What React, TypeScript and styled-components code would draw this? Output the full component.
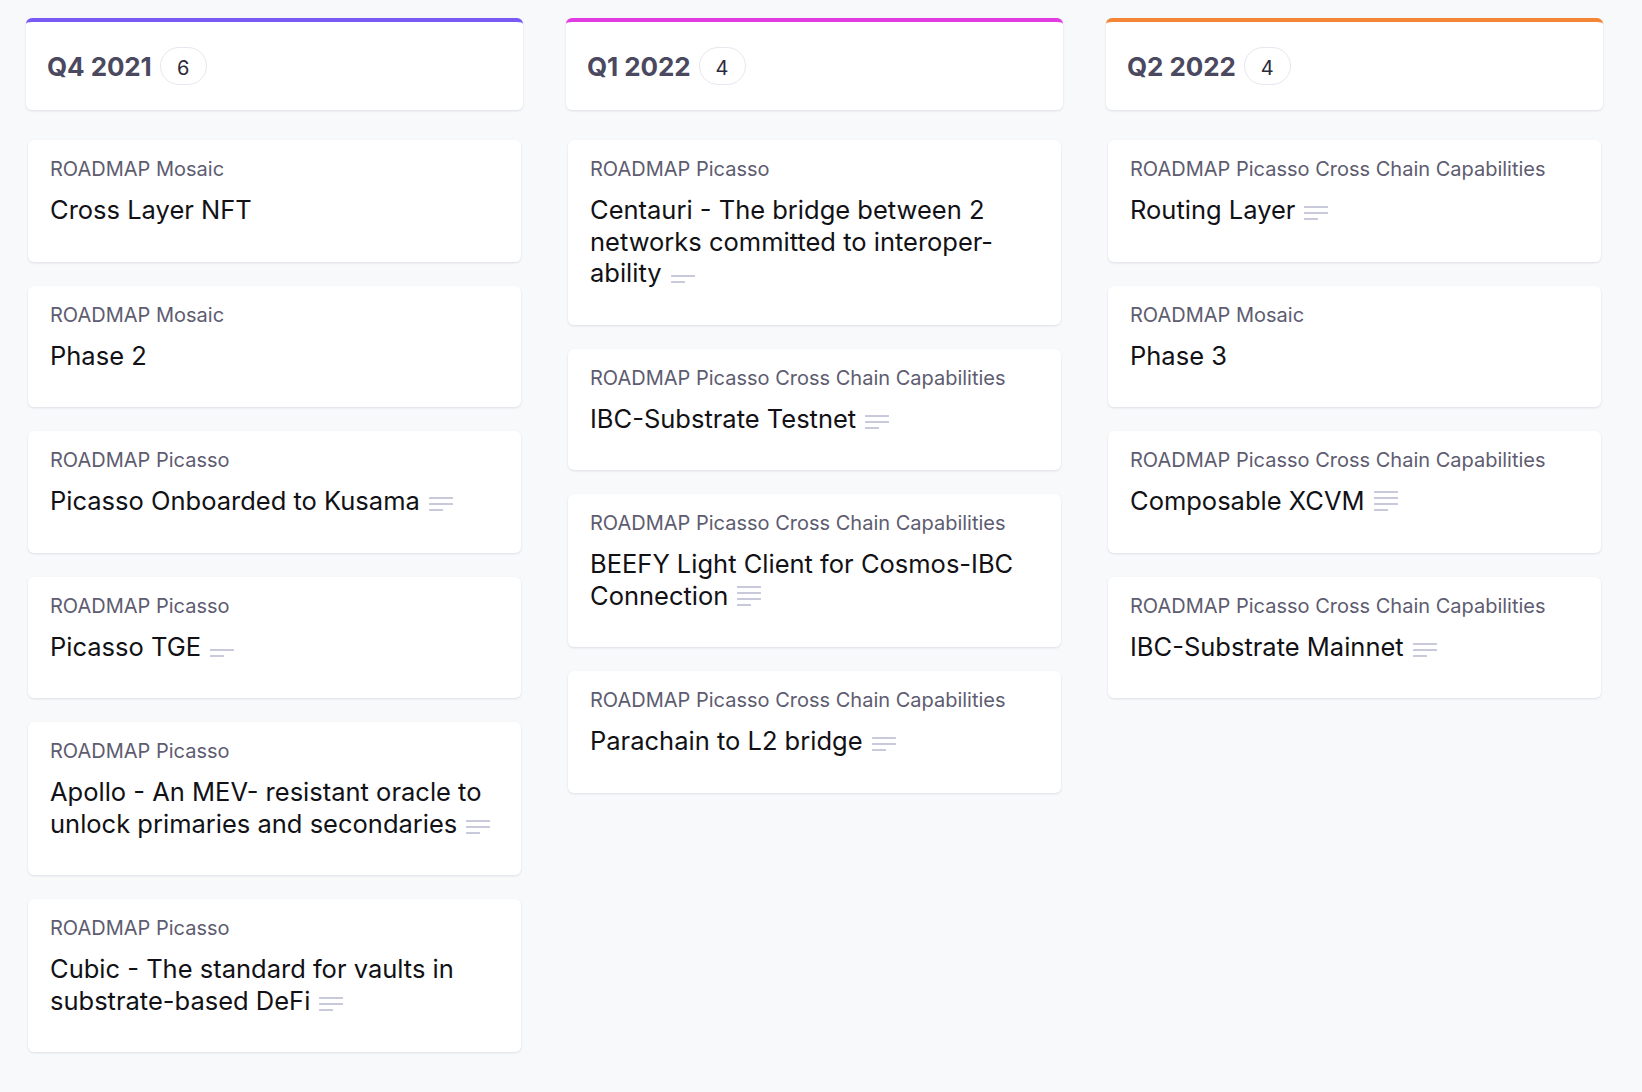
import React from "react";
import styled, { createGlobalStyle } from "styled-components";

const GlobalStyle = createGlobalStyle`
  html, body {
    margin: 0;
    padding: 0;
    background: #f8f9fb;
    font-family: Inter, "Noto Sans", "Liberation Sans", sans-serif;
    -webkit-font-smoothing: antialiased;
  }
`;

type CardData = { meta: string; title: React.ReactNode; lines?: number };
type ColumnData = { name: string; color: string; cards: CardData[] };

const columns: ColumnData[] = [
  {
    name: "Q4 2021",
    color: "#7a5af5",
    cards: [
      { meta: "ROADMAP Mosaic", title: "Cross Layer NFT" },
      { meta: "ROADMAP Mosaic", title: "Phase 2" },
      { meta: "ROADMAP Picasso", title: "Picasso Onboarded to Kusama", lines: 3 },
      { meta: "ROADMAP Picasso", title: "Picasso TGE", lines: 2 },
      {
        meta: "ROADMAP Picasso",
        title: "Apollo - An MEV- resistant oracle to unlock primaries and secondaries",
        lines: 3,
      },
      {
        meta: "ROADMAP Picasso",
        title: "Cubic - The standard for vaults in substrate-based DeFi",
        lines: 3,
      },
    ],
  },
  {
    name: "Q1 2022",
    color: "#e23be2",
    cards: [
      {
        meta: "ROADMAP Picasso",
        title: "Centauri - The bridge between 2 networks committed to interoper\u00ADability",
        lines: 2,
      },
      { meta: "ROADMAP Picasso Cross Chain Capabilities", title: "IBC-Substrate Testnet", lines: 3 },
      {
        meta: "ROADMAP Picasso Cross Chain Capabilities",
        title: "BEEFY Light Client for Cosmos-IBC Connection",
        lines: 4,
      },
      { meta: "ROADMAP Picasso Cross Chain Capabilities", title: "Parachain to L2 bridge", lines: 3 },
    ],
  },
  {
    name: "Q2 2022",
    color: "#f38535",
    cards: [
      { meta: "ROADMAP Picasso Cross Chain Capabilities", title: "Routing Layer", lines: 3 },
      { meta: "ROADMAP Mosaic", title: "Phase 3" },
      { meta: "ROADMAP Picasso Cross Chain Capabilities", title: "Composable XCVM", lines: 4 },
      { meta: "ROADMAP Picasso Cross Chain Capabilities", title: "IBC-Substrate Mainnet", lines: 3 },
    ],
  },
];

const Board = styled.div`
  display: flex;
  align-items: flex-start;
  gap: 43px;
  padding: 18px 39px 40px 26px;
`;

const Column = styled.section`
  width: 497px;
  flex: 0 0 497px;
  display: flex;
  flex-direction: column;
`;

const ColumnHeader = styled.header<{ $color: string }>`
  box-sizing: border-box;
  height: 92px;
  background: #ffffff;
  border-top: 4px solid ${(p) => p.$color};
  border-radius: 6px;
  box-shadow: 0 1px 3px rgba(30, 30, 60, 0.08), 0 1px 2px rgba(30, 30, 60, 0.04);
  display: flex;
  align-items: center;
  gap: 8px;
  padding: 0 20px 0 21px;
`;

const ColumnTitle = styled.h2`
  margin: 0;
  font-size: 26px;
  font-weight: 700;
  color: #4a4960;
  letter-spacing: -0.1px;
`;

const CountBadge = styled.span`
  box-sizing: border-box;
  min-width: 47px;
  height: 38px;
  padding: 3px 14px 0;
  border: 1.5px solid #e7e7f0;
  border-radius: 19px;
  display: inline-flex;
  align-items: center;
  justify-content: center;
  font-size: 20px;
  color: #2b2a3a;
`;

const CardList = styled.div`
  margin-top: 30px;
  padding: 0 2px;
  display: flex;
  flex-direction: column;
  gap: 24px;
`;

const Card = styled.article`
  background: #ffffff;
  border-radius: 6px;
  box-shadow: 0 1px 3px rgba(30, 30, 60, 0.08), 0 1px 2px rgba(30, 30, 60, 0.04);
  padding: 17px 22px 36px 22px;
`;

const Meta = styled.div`
  font-size: 20px;
  line-height: 24px;
  color: #5d5c70;
  margin-bottom: 13px;
`;

const Title = styled.div`
  font-size: 25.5px;
  line-height: 31.5px;
  color: #111116;
`;

const DescIcon = styled.svg`
  display: inline-block;
  margin-left: 9px;
  vertical-align: -1px;
`;

function LinesIcon({ count }: { count: number }) {
  const h = (count - 1) * 6 + 2;
  return (
    <DescIcon width={24} height={h} viewBox={`0 0 24 ${h}`} aria-hidden>
      {Array.from({ length: count }).map((_, i) => (
        <rect
          key={i}
          x={0}
          y={i * 6}
          width={i === count - 1 ? 14 : 24}
          height={2}
          rx={0.5}
          fill="#c9c9dc"
        />
      ))}
    </DescIcon>
  );
}

export default function App() {
  return (
    <>
      <GlobalStyle />
      <Board lang="en">
        {columns.map((col) => (
          <Column key={col.name}>
            <ColumnHeader $color={col.color}>
              <ColumnTitle>{col.name}</ColumnTitle>
              <CountBadge>{col.cards.length}</CountBadge>
            </ColumnHeader>
            <CardList>
              {col.cards.map((c, i) => (
                <Card key={i}>
                  <Meta>{c.meta}</Meta>
                  <Title>
                    {c.title}
                    {c.lines ? <LinesIcon count={c.lines} /> : null}
                  </Title>
                </Card>
              ))}
            </CardList>
          </Column>
        ))}
      </Board>
    </>
  );
}
